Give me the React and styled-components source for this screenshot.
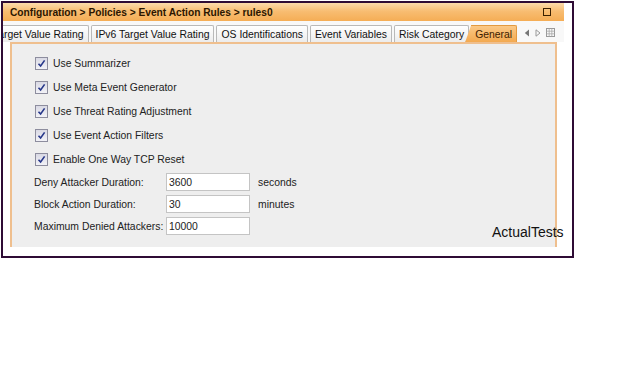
import React from "react";
import styled, { createGlobalStyle } from "styled-components";

const GlobalStyle = createGlobalStyle`
  *, *::before, *::after {
    box-sizing: border-box;
  }
  html, body {
    margin: 0;
    padding: 0;
    background: #ffffff;
  }
  body {
    width: 640px;
    height: 365px;
    overflow: hidden;
    font-family: "Liberation Sans", Arial, sans-serif;
  }
`;

const Page = styled.div`
  position: relative;
  width: 640px;
  height: 365px;
`;

const Frame = styled.div`
  margin: 1px 0 0 1px;
  width: 573px;
  height: 257px;
  padding-right: 8px;
  border: 2px solid #2f0c35;
  background: #ffffff;
  display: flex;
  flex-direction: column;
  overflow: hidden;
`;

const TitleBar = styled.div`
  height: 18px;
  flex-shrink: 0;
  display: flex;
  align-items: center;
  justify-content: space-between;
  padding: 0 13px 0 7px;
  background: linear-gradient(#fcdcab, #f8bd72 45%, #f5ad55);
  font-weight: bold;
  font-size: 10.2px;
  color: #2b1600;
`;

const MaxIcon = styled.span`
  width: 8px;
  height: 8px;
  border: 1.5px solid #3a2000;
`;

const TabRow = styled.div`
  height: 21px;
  flex-shrink: 0;
  display: flex;
  align-items: flex-end;
  background: #f8f8f8;
`;

const TabStrip = styled.div`
  width: 516px;
  overflow: hidden;
  display: flex;
  align-items: flex-end;
`;

const TabList = styled.div`
  display: flex;
  gap: 2px;
  margin-left: -15px;
`;

const Tab = styled.div`
  height: 17px;
  padding: 0 4px;
  display: flex;
  align-items: center;
  white-space: nowrap;
  font-size: 10.4px;
  color: ${({ $active }) => ($active ? "#3d2000" : "#111")};
  border: 1px solid ${({ $active }) => ($active ? "#e39a40" : "#b9b9b9")};
  border-bottom: none;
  border-radius: 2px 2px 0 0;
  background: ${({ $active }) =>
    $active
      ? "linear-gradient(#fbc987, #f3a950)"
      : "linear-gradient(#ffffff, #ececec)"};
  ${({ $active }) =>
    $active &&
    `
    margin-left: -6px;
    padding-left: 9px;
    clip-path: polygon(6px 0, 100% 0, 100% 100%, 0 100%);
  `}
`;

const TabNav = styled.div`
  flex: 1;
  display: flex;
  align-items: center;
  gap: 5px;
  padding: 0 0 5px 5px;
`;

const Panel = styled.div`
  flex: 1;
  margin: 0 0 9px 7px;
  width: 547px;
  border: 2px solid #efbf8e;
  border-bottom: none;
  background: #eeeeee;
  padding: 7px 0 0 22px;
  font-size: 10.4px;
  color: #222;
`;

const CheckRow = styled.label`
  height: 24px;
  display: flex;
  align-items: center;
  gap: 5px;
  padding-left: 1px;
`;

const Box = styled.span`
  width: 13px;
  height: 13px;
  border: 1px solid #8d8d9e;
  background: linear-gradient(#d9d9e4, #f2f2f7);
  display: flex;
  align-items: center;
  justify-content: center;
`;

const Fields = styled.div`
  margin-top: 2px;
  display: flex;
  flex-direction: column;
  gap: 4px;
`;

const FieldRow = styled.div`
  height: 18px;
  display: flex;
  align-items: center;
  white-space: nowrap;
`;

const FieldLabel = styled.span`
  width: 132px;
`;

const Input = styled.div`
  width: 84px;
  height: 18px;
  padding-left: 2px;
  border: 1px solid #c4c4c4;
  background: #fff;
  display: flex;
  align-items: center;
`;

const Unit = styled.span`
  margin-left: 8px;
`;

const Watermark = styled.div`
  position: absolute;
  left: 492px;
  top: 223px;
  font-size: 14px;
  color: #111;
`;

const Check = () => (
  <svg width="9" height="9" viewBox="0 0 9 9">
    <path d="M1.5 4.8 L3.6 7 L7.6 1.4" fill="none" stroke="#26378a" strokeWidth="1.6" />
  </svg>
);

const NavIcons = () => (
  <>
    <svg width="6" height="8" viewBox="0 0 6 8">
      <path d="M5 0.5 L0.8 4 L5 7.5 Z" fill="#777" />
    </svg>
    <svg width="6" height="8" viewBox="0 0 6 8">
      <path d="M1 0.8 L5 4 L1 7.2 Z" fill="none" stroke="#999" strokeWidth="1" />
    </svg>
    <svg width="9" height="9" viewBox="0 0 9 9">
      <rect x="0.5" y="0.5" width="8" height="8" fill="none" stroke="#999" />
      <path d="M0.5 3.2 H8.5 M0.5 5.8 H8.5 M3.2 0.5 V8.5 M5.8 0.5 V8.5" stroke="#aaa" strokeWidth="0.8" />
    </svg>
  </>
);

const options = [
  "Use Summarizer",
  "Use Meta Event Generator",
  "Use Threat Rating Adjustment",
  "Use Event Action Filters",
  "Enable One Way TCP Reset",
];

const fields = [
  { label: "Deny Attacker Duration:", value: "3600", unit: "seconds" },
  { label: "Block Action Duration:", value: "30", unit: "minutes" },
  { label: "Maximum Denied Attackers:", value: "10000" },
];

const tabs = [
  "Target Value Rating",
  "IPv6 Target Value Rating",
  "OS Identifications",
  "Event Variables",
  "Risk Category",
];

const App = () => {
  return (
    <Page>
      <GlobalStyle />
      <Frame>
        <TitleBar>
          <span>Configuration &gt; Policies &gt; Event Action Rules &gt; rules0</span>
          <MaxIcon />
        </TitleBar>
        <TabRow>
          <TabStrip>
            <TabList>
              {tabs.map(t => (
                <Tab key={t}>{t}</Tab>
              ))}
              <Tab $active>General</Tab>
            </TabList>
          </TabStrip>
          <TabNav>
            <NavIcons />
          </TabNav>
        </TabRow>
        <Panel>
          {options.map(o => (
            <CheckRow key={o}>
              <Box>
                <Check />
              </Box>
              {o}
            </CheckRow>
          ))}
          <Fields>
            {fields.map(f => (
              <FieldRow key={f.label}>
                <FieldLabel>{f.label}</FieldLabel>
                <Input>{f.value}</Input>
                {f.unit && <Unit>{f.unit}</Unit>}
              </FieldRow>
            ))}
          </Fields>
        </Panel>
      </Frame>
      <Watermark>ActualTests</Watermark>
    </Page>
  );
};

export default App;
